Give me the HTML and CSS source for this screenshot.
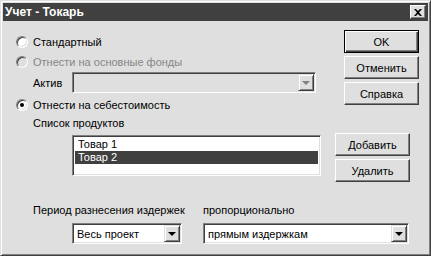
FILE: index.html
```html
<!DOCTYPE html>
<html lang="ru">
<head>
  <meta charset="UTF-8">
  <title>Учет - Токарь</title>
  <link rel="stylesheet" href="styles.css">
</head>
<body>
  <div class="window">
    <div class="titlebar">
      <span class="title">Учет - Токарь</span>
      <button class="close-btn">
        <svg width="8" height="7" viewBox="0 0 8 7"><path d="M0 0h2l2 2 2-2h2L5 3.5 8 7H6L4 5 2 7H0l3-3.5z" fill="#000"/></svg>
      </button>
    </div>

    <div class="dialog-body">
      <div class="top-section">
        <div class="options">
          <label class="radio-row">
            <span class="radio"></span>
            <span>Стандартный</span>
          </label>
          <label class="radio-row disabled second">
            <span class="radio"></span>
            <span>Отнести на основные фонды</span>
          </label>
          <div class="field-row">
            <span class="field-label">Актив</span>
            <div class="combo disabled asset-combo">
              <span class="combo-text"></span>
              <span class="combo-arrow"><span class="arrow"></span></span>
            </div>
          </div>
          <label class="radio-row fourth">
            <span class="radio checked"></span>
            <span>Отнести на себестоимость</span>
          </label>
        </div>
        <div class="side-buttons">
          <button class="btn default">OK</button>
          <button class="btn">Отменить</button>
          <button class="btn">Справка</button>
        </div>
      </div>

      <div class="list-label">Список продуктов</div>
      <div class="list-row">
        <div class="listbox">
          <div class="list-item">Товар 1</div>
          <div class="list-item selected">Товар 2</div>
        </div>
        <div class="list-buttons">
          <button class="btn">Добавить</button>
          <button class="btn">Удалить</button>
        </div>
      </div>

      <div class="bottom-row">
        <div class="period-group">
          <div class="group-label">Период разнесения издержек</div>
          <div class="combo period-combo">
            <span class="combo-text">Весь проект</span>
            <span class="combo-arrow"><span class="arrow"></span></span>
          </div>
        </div>
        <div class="prop-group">
          <div class="group-label">пропорционально</div>
          <div class="combo prop-combo">
            <span class="combo-text">прямым издержкам</span>
            <span class="combo-arrow"><span class="arrow"></span></span>
          </div>
        </div>
      </div>
    </div>
  </div>
</body>
</html>
```

FILE: styles.css
```css
* {
  box-sizing: border-box;
}

body {
  margin: 0;
  background: #dfdfdf;
  font-family: "Liberation Sans", Arial, sans-serif;
  font-size: 11px;
  color: #000;
}

.window {
  width: 431px;
  height: 256px;
  background: #dfdfdf;
  border: 1px solid;
  border-color: #dfdfdf #404040 #404040 #dfdfdf;
  box-shadow: inset 1px 1px #fff, inset -1px -1px #808080;
  padding: 2px;
}

.titlebar {
  height: 18px;
  background: #404040;
  display: flex;
  align-items: center;
  justify-content: space-between;
  padding: 0 2px 0 2px;
}

.title {
  color: #fff;
  font-weight: bold;
  font-size: 12px;
}

.close-btn {
  width: 16px;
  height: 14px;
  padding: 0;
  background: #dfdfdf;
  border: 1px solid;
  border-color: #fff #404040 #404040 #fff;
  box-shadow: inset -1px -1px #808080;
  display: flex;
  align-items: center;
  justify-content: center;
}

.dialog-body {
  padding: 9px 9px 0 13px;
}

.top-section {
  display: flex;
  align-items: flex-start;
}

.options {
  flex: 1;
  padding-top: 4px;
}

.radio-row {
  display: flex;
  align-items: center;
  gap: 5px;
  height: 16px;
}

.radio-row.second,
.radio-row.fourth {
  margin-top: 4px;
}

.radio-row.disabled {
  color: #868686;
}

.radio {
  width: 12px;
  height: 12px;
  border-radius: 50%;
  border: 1px solid;
  border-color: #808080 #fff #fff #808080;
  box-shadow: inset 1px 1px #404040, inset -1px -1px #dfdfdf;
  background: #fff;
  display: flex;
  align-items: center;
  justify-content: center;
}

.radio-row.disabled .radio {
  background: #dfdfdf;
}

.radio.checked::after {
  content: '';
  width: 4px;
  height: 4px;
  border-radius: 50%;
  background: #000;
}

.field-row {
  display: flex;
  align-items: center;
  margin-top: 2px;
  padding-left: 17px;
}

.field-label {
  width: 39px;
}

.combo {
  height: 21px;
  display: flex;
  align-items: center;
  justify-content: space-between;
  background: #fff;
  border: 1px solid;
  border-color: #808080 #fff #fff #808080;
  box-shadow: inset 1px 1px #404040, inset -1px -1px #dfdfdf;
  padding: 1px 1px 1px 4px;
}

.combo.disabled {
  background: #dfdfdf;
}

.combo-text {
  white-space: nowrap;
}

.combo-arrow {
  width: 16px;
  height: 17px;
  background: #dfdfdf;
  border: 1px solid;
  border-color: #dfdfdf #404040 #404040 #dfdfdf;
  box-shadow: inset 1px 1px #fff, inset -1px -1px #808080;
  display: flex;
  align-items: center;
  justify-content: center;
}

.arrow {
  width: 0;
  height: 0;
  border-left: 4px solid transparent;
  border-right: 4px solid transparent;
  border-top: 4px solid #000;
}

.combo.disabled .arrow {
  border-top-color: #808080;
}

.asset-combo {
  width: 244px;
}

.side-buttons {
  display: flex;
  flex-direction: column;
  gap: 3px;
  width: 75px;
}

.btn {
  height: 23px;
  width: 75px;
  padding: 0;
  font-family: "Liberation Sans", Arial, sans-serif;
  font-size: 11px;
  color: #000;
  background: #dfdfdf;
  border: 1px solid;
  border-color: #fff #404040 #404040 #fff;
  box-shadow: inset -1px -1px #808080;
}

.btn.default {
  border-color: #000;
  box-shadow: inset 1px 1px #fff, inset -1px -1px #404040, inset -2px -2px #808080;
}

.list-label {
  margin-top: 3px;
  padding-left: 17px;
  line-height: 14px;
}

.list-row {
  display: flex;
  align-items: flex-start;
  margin-top: 3px;
  padding-left: 56px;
}

.listbox {
  width: 249px;
  height: 41px;
  margin-top: 2px;
  background: #fff;
  border: 1px solid;
  border-color: #808080 #fff #fff #808080;
  box-shadow: inset 1px 1px #404040, inset -1px -1px #dfdfdf;
  padding: 2px 2px;
}

.list-item {
  height: 13px;
  line-height: 13px;
  padding-left: 3px;
}

.list-item.selected {
  background: #404040;
  color: #fff;
}

.list-buttons {
  display: flex;
  flex-direction: column;
  gap: 3px;
  margin-left: 14px;
}

.bottom-row {
  display: flex;
  margin-top: 21px;
  padding-left: 17px;
}

.group-label {
  line-height: 14px;
}

.period-group {
  width: 170px;
}

.period-group .combo {
  margin-left: 39px;
}

.period-combo,
.prop-combo {
  margin-top: 6px;
}

.period-combo {
  width: 110px;
}

.prop-combo {
  width: 206px;
}
```
